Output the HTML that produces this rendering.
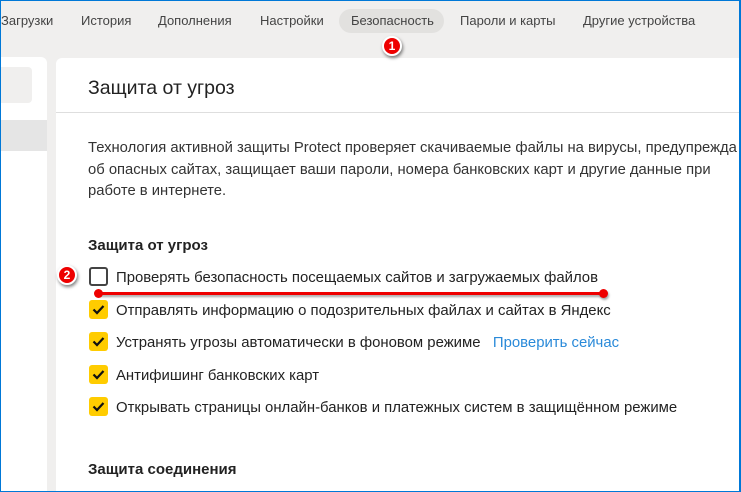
<!DOCTYPE html>
<html><head><meta charset="utf-8"><style>
*{margin:0;padding:0;box-sizing:border-box}
html,body{width:741px;height:492px;overflow:hidden}
body{background:#f0efee;font-family:"Liberation Sans",sans-serif;color:#222;position:relative}
.frame{position:absolute;left:0;top:0;width:741px;height:492px;border:1px solid #0078d7;border-right-width:2px;pointer-events:none;z-index:10}
.nav{position:absolute;top:13px;font-size:13px;color:#444;white-space:nowrap}
.pill{position:absolute;left:339px;top:9px;width:105px;height:24px;border-radius:12px;background:#e2e1df}
.badge{position:absolute;width:20px;height:20px;border-radius:50%;background:#e00;border:2px solid #fff;box-shadow:1px 2px 3px rgba(0,0,0,.5);color:#fff;font-size:12px;font-weight:bold;text-align:center;line-height:16px;z-index:5}
.left{position:absolute;left:0;top:57px;width:47px;height:435px;background:#fff;border-radius:0 6px 0 0}
.main{position:absolute;left:56px;top:58px;width:685px;height:434px;background:#fff;border-radius:6px 0 0 0}
.hdr{position:absolute;left:56px;top:112px;width:685px;height:1px;background:#dedede}
.t{position:absolute;white-space:nowrap}
.cb{position:absolute;left:89px;width:19px;height:19px;border-radius:3px;background:#ffcc00}
.cb svg{position:absolute;left:3px;top:4px}
.it{position:absolute;left:116px;font-size:14.9px;white-space:nowrap;color:#222}
</style></head><body>
<div class="pill"></div>
<div class="nav" style="left:1px">Загрузки</div>
<div class="nav" style="left:81px">История</div>
<div class="nav" style="left:158px">Дополнения</div>
<div class="nav" style="left:260px">Настройки</div>
<div class="nav" style="left:351px">Безопасность</div>
<div class="nav" style="left:460px">Пароли и карты</div>
<div class="nav" style="left:583px">Другие устройства</div>
<div class="badge" style="left:382px;top:36px">1</div>
<div class="left"></div>
<div style="position:absolute;left:0;top:67px;width:32px;height:36px;background:#f0efee;border-radius:0 4px 4px 0"></div>
<div style="position:absolute;left:0;top:120px;width:47px;height:31px;background:#e5e5e5"></div>
<div class="main"></div>
<div class="hdr"></div>
<div class="t" style="left:88px;top:77px;font-size:19.5px;color:#222">Защита от угроз</div>
<div class="t" style="left:88px;top:138px;font-size:14.8px;line-height:21.5px;color:#333">Технология активной защиты Protect проверяет скачиваемые файлы на вирусы, предупрежда<br>об опасных сайтах, защищает ваши пароли, номера банковских карт и другие данные при<br>работе в интернете.</div>
<div class="t" style="left:88px;top:237px;font-size:15px;font-weight:bold;color:#222">Защита от угроз</div>
<div style="position:absolute;left:89px;top:267px;width:19px;height:19px;border:2px solid #444;border-radius:3px;background:#fff"></div>
<div class="badge" style="left:57px;top:265px">2</div>
<div class="it" style="top:270px">Проверять безопасность посещаемых сайтов и загружаемых файлов</div>
<div style="position:absolute;left:98px;top:292px;width:506px;height:3px;background:#e00;box-shadow:1px 2px 2px rgba(0,0,0,.35)"></div>
<div style="position:absolute;left:94px;top:289px;width:9px;height:9px;border-radius:50%;background:#e00"></div>
<div style="position:absolute;left:599px;top:289px;width:9px;height:9px;border-radius:50%;background:#e00;box-shadow:1px 2px 2px rgba(0,0,0,.35)"></div>
<div class="cb" style="top:300px"><svg width="13" height="11"><path d="M1.5 5.5 L5 9 L11.5 2" stroke="#111" stroke-width="2.2" fill="none"/></svg></div>
<div class="it" style="top:303px">Отправлять информацию о подозрительных файлах и сайтах в Яндекс</div>
<div class="cb" style="top:332px"><svg width="13" height="11"><path d="M1.5 5.5 L5 9 L11.5 2" stroke="#111" stroke-width="2.2" fill="none"/></svg></div>
<div class="it" style="top:335px">Устранять угрозы автоматически в фоновом режиме&nbsp;&nbsp;&nbsp;<span style="color:#2a8ad9">Проверить сейчас</span></div>
<div class="cb" style="top:365px"><svg width="13" height="11"><path d="M1.5 5.5 L5 9 L11.5 2" stroke="#111" stroke-width="2.2" fill="none"/></svg></div>
<div class="it" style="top:368px">Антифишинг банковских карт</div>
<div class="cb" style="top:397px"><svg width="13" height="11"><path d="M1.5 5.5 L5 9 L11.5 2" stroke="#111" stroke-width="2.2" fill="none"/></svg></div>
<div class="it" style="top:400px">Открывать страницы онлайн-банков и платежных систем в защищённом режиме</div>
<div class="t" style="left:88px;top:461px;font-size:15px;font-weight:bold;color:#222">Защита соединения</div>
<div class="frame"></div>
</body></html>
